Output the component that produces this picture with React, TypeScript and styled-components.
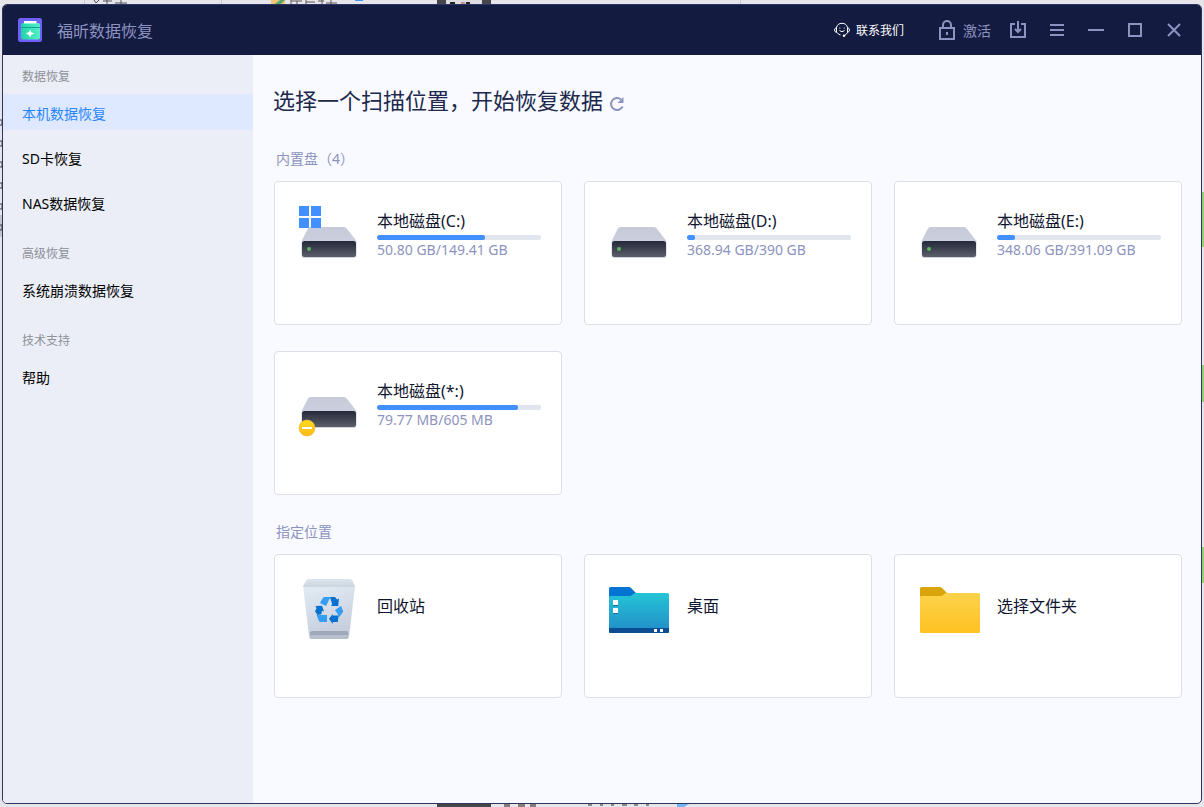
import React from "react";
import styled, { createGlobalStyle } from "styled-components";

const GlobalStyle = createGlobalStyle`
  * { box-sizing: border-box; }
  body {
    margin: 0;
    font-family: "Noto Sans", "Noto Sans CJK SC", sans-serif;
    background: #e6e6ea;
  }
  button { font: inherit; }
`;

const Desktop = styled.div`
  position: relative;
  min-height: 100vh;
  display: flex;
  padding: 4px 2px 3px;
  overflow: hidden;
`;

const Backdrop = styled.svg`
  position: absolute;
  left: 0;
  top: 0;
  width: 100%;
  height: 100%;
`;

const Window = styled.div`
  position: relative;
  flex: 1;
  display: flex;
  flex-direction: column;
  border: 1px solid #2b3463;
  border-radius: 5px;
  overflow: hidden;
  background: #f9faff;
`;

const TitleBar = styled.header`
  display: flex;
  align-items: center;
  height: 50px;
  padding: 0 8px 0 15px;
  background: #141b41;
  color: #8d93c0;
`;

const Brand = styled.div`
  display: flex;
  align-items: center;
  gap: 15px;
  flex: 1;
  font-size: 16px;
  line-height: 24px;
`;

const BarLabel = styled.span`
  padding-top: 2px;
`;

const BarButton = styled.button<{ $bright?: boolean }>`
  display: flex;
  align-items: center;
  gap: ${(p) => (p.$bright ? 6 : 7)}px;
  margin-right: ${(p) => (p.$bright ? 34 : 7)}px;
  padding: 0;
  border: 0;
  background: none;
  color: ${(p) => (p.$bright ? "#ffffff" : "#8d93c0")};
  font-size: ${(p) => (p.$bright ? 12 : 14)}px;
  line-height: 20px;
`;

const IconButton = styled.button`
  display: flex;
  align-items: center;
  justify-content: center;
  width: 39px;
  height: 39px;
  padding: 0;
  border: 0;
  background: none;
  color: #8d93c0;
`;

const Body = styled.div`
  flex: 1;
  display: flex;
`;

const Sidebar = styled.nav`
  width: 250px;
  flex-shrink: 0;
  display: flex;
  flex-direction: column;
  gap: 21px;
  padding-top: 9px;
  background: #ebeef7;
`;

const NavGroup = styled.section`
  display: flex;
  flex-direction: column;
`;

const NavHeading = styled.h2`
  margin: 0 0 4px;
  padding-left: 19px;
  font-size: 12px;
  font-weight: 400;
  line-height: 26px;
  color: #8e9097;
`;

const NavList = styled.ul`
  display: flex;
  flex-direction: column;
  gap: 9px;
  margin: 0;
  padding: 0;
  list-style: none;
`;

const NavLink = styled.a<{ $active?: boolean }>`
  display: flex;
  align-items: center;
  height: 36px;
  padding: 3px 0 0 19px;
  font-size: 14px;
  line-height: 20px;
  text-decoration: none;
  color: ${(p) => (p.$active ? "#2a86ff" : "#000000")};
  background: ${(p) => (p.$active ? "#dee9ff" : "transparent")};
`;

const Main = styled.main`
  flex: 1;
  min-width: 0;
  padding: 31px 19px 31px 21px;
`;

const TitleRow = styled.div`
  display: flex;
  align-items: flex-start;
  gap: 6px;
  height: 32px;
  margin-bottom: 31px;
`;

const PageTitle = styled.h1`
  margin: 0 0 0 -1px;
  font-size: 22px;
  font-weight: 400;
  line-height: 28px;
  color: #20284d;
`;

const RefreshButton = styled(IconButton)`
  width: 16px;
  height: 16px;
  margin-top: 10px;
`;

const Section = styled.section`
  margin-bottom: 27px;
`;

const SectionLabel = styled.h2`
  margin: 0 0 12px 2px;
  font-size: 14px;
  font-weight: 400;
  line-height: 20px;
  color: #8d93c0;
`;

const CardGrid = styled.div`
  display: grid;
  grid-template-columns: repeat(3, 1fr);
  gap: 26px 22px;
`;

const Card = styled.button`
  display: flex;
  align-items: flex-start;
  gap: 15px;
  height: 144px;
  padding: 24px 20px 24px 23px;
  border: 1px solid #dcdeeb;
  border-radius: 4px;
  background: #ffffff;
  text-align: left;
  color: #11162f;
`;

const Art = styled.svg`
  width: 64px;
  height: 64px;
  flex-shrink: 0;
`;

const Info = styled.div`
  flex: 1;
  min-width: 0;
  padding-top: 3px;
`;

const Name = styled.div`
  font-size: 16px;
  line-height: 24px;
`;

const PlaceName = styled(Name)`
  padding-top: 15px;
`;

const Track = styled.div`
  height: 5px;
  margin: 2px 0 1px;
  border-radius: 2px;
  background: #e1e5ee;
  overflow: hidden;
`;

const Fill = styled.div`
  height: 100%;
  border-radius: 2px;
  background: #428fff;
`;

const Usage = styled.div`
  font-size: 14px;
  line-height: 18px;
  color: #8d93c0;
`;

const DriveArt = ({ id, badge }: { id: string; badge?: string }) => (
  <Art viewBox="0 0 64 64" aria-hidden="true">
    <defs>
      <linearGradient id={id + "top"} x1="0" y1="0" x2="0" y2="1">
        <stop offset="0" stopColor="#c6cada" />
        <stop offset="1" stopColor="#d2d4df" />
      </linearGradient>
      <linearGradient id={id + "front"} x1="0" y1="0" x2="0" y2="1">
        <stop offset="0" stopColor="#24293a" />
        <stop offset="1" stopColor="#5b5e6a" />
      </linearGradient>
      <linearGradient id={id + "gold"} x1="0" y1="0" x2="0" y2="1">
        <stop offset="0" stopColor="#ffdb1f" />
        <stop offset="1" stopColor="#fdb913" />
      </linearGradient>
    </defs>
    <path d="M12.5 21h33q2.5 0 3.6 2L58.5 35v14q0 3-3 3H6.500q-3 0-3-3V35L9.700 23q1-2 2.800-2Z" fill={`url(#${id}top)`} />
    <rect x="4" y="35" width="54" height="16" rx="2.5" fill={`url(#${id}front)`} />
    {badge !== "minus" && <circle cx="11" cy="43" r="2" fill="#59b35f" />}
    {badge === "windows" && <path d="M1 0h10v10H1zM13 0h10v10H13zM1 12h10v10H1zM13 12h10v10H13z" fill="#428fff" />}
    {badge === "minus" && (
      <g>
        <circle cx="9" cy="52" r="8" fill={`url(#${id}gold)`} stroke="#edb43c" strokeWidth="0.6" />
        <rect x="4" y="51" width="10" height="2" rx="0.5" fill="#fff" />
      </g>
    )}
  </Art>
);

const BinArt = () => (
  <Art viewBox="0 0 64 64" aria-hidden="true">
    <defs>
      <linearGradient id="binBody" x1="0" y1="0" x2="0.3" y2="1">
        <stop offset="0" stopColor="#e2edf5" />
        <stop offset="1" stopColor="#c6cddd" />
      </linearGradient>
      <linearGradient id="binRim" x1="0" y1="0" x2="0" y2="1">
        <stop offset="0" stopColor="#dde5ed" />
        <stop offset="1" stopColor="#ccd4df" />
      </linearGradient>
    </defs>
    <path d="M5 7h52l-6 51q-.3 2-2.300 2H13.500q-2 0-2.300-2Z" fill="url(#binBody)" />
    <path d="M10.500 0h41q1.500 0 2.500 1l3 6-1 1H6L5 7l3.500-6q.7-1 2-1Z" fill="url(#binRim)" />
    <path d="M14 52h34q2 0 2.500 2l-.5 4q-.3 2-2 2H14q-1.700 0-2-2l-.2-4q.5-2 2.200-2Z" fill="#9ea8b8" />
    <path d="M12 56h38l-.3 2.500q-.3 1.500-1.700 1.500H14q-1.500 0-1.800-1.500Z" fill="#b7bfcc" />
    <path d="M26 18h6.500L28 27l-6-3 3-5.300Z" fill="#349df6" />
    <path d="M32 18h5l2 2.500 2-1L40.200 27H33l1.200-1.800Z" fill="#0671cf" />
    <path d="M43 27l2.300 5.500L41.500 38 37 31Z" fill="#349df6" />
    <path d="M31 39.700L34.700 35v1.500h6L39.700 43h-5v2Z" fill="#0671cf" />
    <path d="M18.500 36H29v7h-6.500q-1 0-1.700-1.200Z" fill="#349df6" />
    <path d="M17.500 27l6.500-.2 2 5.700-2-.7-.6 3.500-4 .7-2.400-3.700 1.500-3Z" fill="#0671cf" />
  </Art>
);

const FolderArt = ({ desktop }: { desktop?: boolean }) => {
  const id = desktop ? "folderBlue" : "folderYellow";
  const x = desktop ? 1 : 2;
  return (
    <Art viewBox="0 0 64 64" aria-hidden="true">
      <defs>
        <linearGradient id={id} x1="0" y1="0" x2="0" y2="1">
          <stop offset="0" stopColor={desktop ? "#25c4d6" : "#fbd34b"} />
          <stop offset="1" stopColor={desktop ? "#218bc8" : "#ffc122"} />
        </linearGradient>
      </defs>
      <g transform={`translate(${x} 8)`}>
        <path d="M1.500 0h18.500q1 0 2 1l5 5v6H0V1.500Q0 0 1.500 0Z" fill={desktop ? "#0573d1" : "#daa50c"} />
        <path d="M1.500 9H21q1 0 2-1l1.500-1q1-1 2.500-1h31.500Q60 6 60 7.500v37q0 1.500-1.500 1.500h-57Q0 46 0 44.500v-34Q0 9 1.500 9Z" fill={`url(#${id})`} />
        {desktop && (
          <g>
            <path d="M0 41h60v3.500q0 1.500-1.500 1.500h-57Q0 46 0 44.500Z" fill="#0b4c92" />
            <path d="M4 18h5v1H4zM4 26h5v1H4z" fill="#176a9d" />
            <path d="M4 13h5v5H4zM4 21h5v5H4zM45 42h3v3h-3zM51 42h3v3h-3z" fill="#fff" />
          </g>
        )}
      </g>
    </Art>
  );
};

const Logo = () => (
  <svg width="24" height="24" viewBox="0 0 24 24" aria-hidden="true">
    <defs>
      <linearGradient id="logoBox" x1="0" x2="1">
        <stop offset="0" stopColor="#1fd5a8" />
        <stop offset="1" stopColor="#55efc6" />
      </linearGradient>
    </defs>
    <rect width="24" height="24" rx="2.5" fill="#7060fb" />
    <path d="M3 7q0-2 2-2h15q2 0 2 2v12.500q0 2-2 2H5q-2 0-2-2Z" fill="url(#logoBox)" />
    <rect x="6" y="3" width="12.5" height="2.5" rx="0.5" fill="#fff" />
    <path d="M3 9.500h19" stroke="#159e9b" />
    <path d="M12 12.500l1 2 2.500 1-2.500 1-1 2-1-2-2.500-1 2.500-1Z" fill="#fff" stroke="#fff" strokeWidth="0.8" />
  </svg>
);

const disks = [
  { name: "本地磁盘(C:)", usage: "50.80 GB/149.41 GB", fill: 66, badge: "windows" },
  { name: "本地磁盘(D:)", usage: "368.94 GB/390 GB", fill: 5 },
  { name: "本地磁盘(E:)", usage: "348.06 GB/391.09 GB", fill: 11 },
  { name: "本地磁盘(*:)", usage: "79.77 MB/605 MB", fill: 86, badge: "minus" },
];

const places = [
  { name: "回收站", art: <BinArt /> },
  { name: "桌面", art: <FolderArt desktop /> },
  { name: "选择文件夹", art: <FolderArt /> },
];

const menu = [
  { title: "数据恢复", items: ["本机数据恢复", "SD卡恢复", "NAS数据恢复"] },
  { title: "高级恢复", items: ["系统崩溃数据恢复"] },
  { title: "技术支持", items: ["帮助"] },
];

const controls = [
  { label: "导入", d: "M6 5H2v13h14V5h-4M9 2v10M6 10l3 3 3-3", h: 22 },
  { label: "菜单", d: "M2 5h14M2 10h14M2 15h14", h: 20 },
  { label: "最小化", d: "M1 10h16", h: 20 },
  { label: "最大化", d: "M3 4h12v12H3Z", h: 20 },
  { label: "关闭", d: "M3 4l12 12M15 4L3 16", h: 20 },
];

export default function App() {
  return (
    <>
      <GlobalStyle />
      <Desktop>
        <Backdrop aria-hidden="true">
          <path d="M84 0h1v4h-1zM221 0h1v4h-1zM740 0h1v4h-1z" fill="#c9c9ce" />
          <path d="M94 0l2 3 3-3M103 1h9M107 0v4M115 3h12M121 0v4" stroke="#50525e" fill="none" />
          <path d="M271 0h14v4h-14z" fill="#efc679" />
          <path d="M275 4l5-4h5l-4 4Z" fill="#58a86a" />
          <path d="M291 0v4M291 1h11M297 1v3M306 0v4M306 2h9M318 1h6M322 0v4M326 3h11M331 0v4" stroke="#5d5a55" />
          <path d="M355 0h8v1h-8z" fill="#3f9af0" />
          <path d="M437 0h54v4h-54zM437 804h54v3h-54z" fill="#45454a" />
          <path d="M446 0h36v4h-36z" fill="#dedee2" />
          <path d="M450 3h5M466 3h4" stroke="#222" strokeWidth="2" />
          <path d="M461 2h4v2h-4z" fill="#c98f86" />
          <path d="M1201 192h3v55h-3zM1201 365h3v37h-3zM1201 547h3v36h-3z" fill="#8ed472" />
          <path d="M0 215h2v22H0z" fill="#c4c4c9" />
          <path d="M0 120h2v5H0M0 141h2v5H0M0 162h2v5H0M0 183h2v5H0M0 204h2v5H0M0 225h2v5H0" stroke="#3c3d42" fill="none" />
          <path d="M504 804h6v3h-6zM518 804h7v3h-7zM530 804h6v3h-6z" fill="#8d7b78" />
          <path d="M588 805h4M600 805h3M611 805h3M622 805h5M634 805h4M646 805h3" stroke="#2c2c30" />
          <path d="M677 804h12l-5 3h-7z" fill="#72b5f2" />
        </Backdrop>
        <Window>
          <TitleBar>
            <Brand>
              <Logo />
              <BarLabel>福昕数据恢复</BarLabel>
            </Brand>
            <BarButton type="button" $bright>
              <svg width="16" height="16" viewBox="0 0 16 16" fill="none" stroke="currentColor" aria-hidden="true">
                <path d="M2.500 5.500a5.700 5.700 0 0 1 11 0M13.500 10.500q-1 2-3 3" />
                <path d="M2.500 5.500Q.5 6.300.5 8t2 2.500ZM13.500 5.500q2 .8 2 2.500t-2 2.500Z" />
                <path d="M5.500 8.500q2.500 2.500 5 0M3 10.500q1.200 2 3.500 2.500" />
                <circle cx="5.8" cy="6" r="0.6" fill="currentColor" stroke="none" />
                <circle cx="10.2" cy="6" r="0.6" fill="currentColor" stroke="none" />
                <circle cx="10" cy="13.8" r="1.2" fill="currentColor" stroke="none" />
              </svg>
              <BarLabel>联系我们</BarLabel>
            </BarButton>
            <BarButton type="button">
              <svg width="18" height="22" viewBox="0 0 18 22" fill="none" stroke="currentColor" strokeWidth="2" aria-hidden="true">
                <path d="M2 9h14v11H2ZM5 9V6a4 4 0 0 1 8 0v3M9 13v3" />
              </svg>
              <BarLabel>激活</BarLabel>
            </BarButton>
            {controls.map((c) => (
              <IconButton type="button" key={c.label} aria-label={c.label}>
                <svg width="18" height={c.h} viewBox={`0 0 18 ${c.h}`} fill="none" stroke="currentColor" strokeWidth="2" aria-hidden="true">
                  <path d={c.d} />
                </svg>
              </IconButton>
            ))}
          </TitleBar>
          <Body>
            <Sidebar>
              {menu.map((group, g) => (
                <NavGroup key={group.title}>
                  <NavHeading>{group.title}</NavHeading>
                  <NavList>
                    {group.items.map((item, i) => (
                      <li key={item}>
                        <NavLink href="#" $active={g === 0 && i === 0}>
                          {item}
                        </NavLink>
                      </li>
                    ))}
                  </NavList>
                </NavGroup>
              ))}
            </Sidebar>
            <Main>
              <TitleRow>
                <PageTitle>选择一个扫描位置，开始恢复数据</PageTitle>
                <RefreshButton type="button" aria-label="刷新">
                  <svg width="16" height="16" viewBox="0 0 16 16" fill="none" stroke="currentColor" strokeWidth="2" aria-hidden="true">
                    <path d="M13.500 10.500A6 6 0 1 1 12 3.500" />
                    <path d="M14.500 1v6h-6Z" fill="currentColor" stroke="none" />
                  </svg>
                </RefreshButton>
              </TitleRow>
              <Section>
                <SectionLabel>内置盘（4）</SectionLabel>
                <CardGrid>
                  {disks.map((disk, i) => (
                    <Card type="button" key={disk.name}>
                      <DriveArt id={`drive${i}`} badge={disk.badge} />
                      <Info>
                        <Name>{disk.name}</Name>
                        <Track>
                          <Fill style={{ width: `${disk.fill}%` }} />
                        </Track>
                        <Usage>{disk.usage}</Usage>
                      </Info>
                    </Card>
                  ))}
                </CardGrid>
              </Section>
              <Section>
                <SectionLabel>指定位置</SectionLabel>
                <CardGrid>
                  {places.map((place) => (
                    <Card type="button" key={place.name}>
                      {place.art}
                      <PlaceName>{place.name}</PlaceName>
                    </Card>
                  ))}
                </CardGrid>
              </Section>
            </Main>
          </Body>
        </Window>
      </Desktop>
    </>
  );
}
